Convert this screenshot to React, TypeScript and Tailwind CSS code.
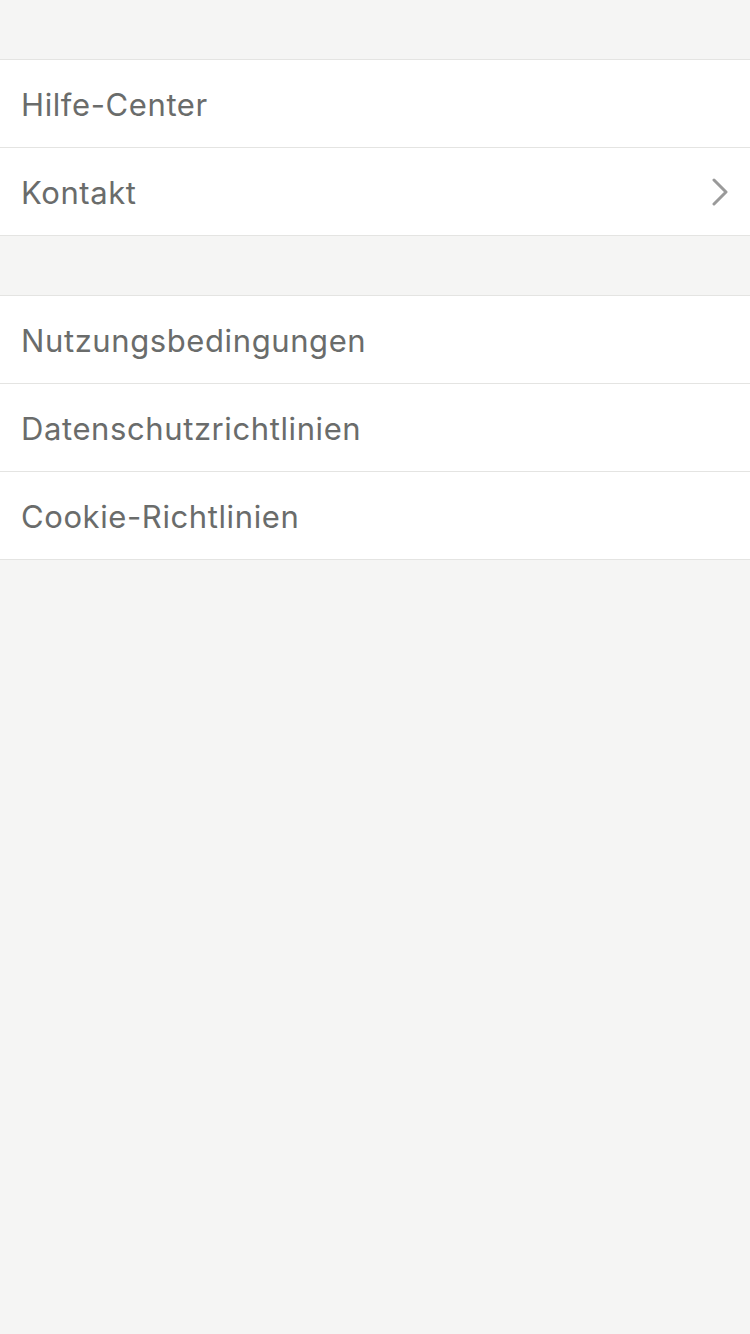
import React from 'react';

const groups: { label: string; chevron?: boolean }[][] = [
  [{ label: 'Hilfe-Center' }, { label: 'Kontakt', chevron: true }],
  [{ label: 'Nutzungsbedingungen' }, { label: 'Datenschutzrichtlinien' }, { label: 'Cookie-Richtlinien' }],
];

export default function App() {
  return (
    <div
      className="min-h-[1334px] bg-[#f5f5f4] pt-[59px]"
      style={{ fontFamily: 'Inter, "Liberation Sans", sans-serif' }}
    >
      {groups.map((rows, gi) => (
        <div key={gi} className="mb-[59px] border-t border-[#e4e4e2] bg-white">
          {rows.map((row) => (
            <div
              key={row.label}
              className="flex h-[88px] items-center justify-between border-b border-[#e4e4e2] pl-[21px] pr-[22px]"
            >
              <span className="pt-[3px] text-[31px] tracking-[0.6px] text-[#6a6c6b]">{row.label}</span>
              {row.chevron && (
                <svg width="16" height="28" viewBox="0 0 16 28" fill="none">
                  <path d="M2 2l12 12L2 26" stroke="#9a9a9a" strokeWidth="3" strokeLinecap="round" strokeLinejoin="round" />
                </svg>
              )}
            </div>
          ))}
        </div>
      ))}
    </div>
  );
}
